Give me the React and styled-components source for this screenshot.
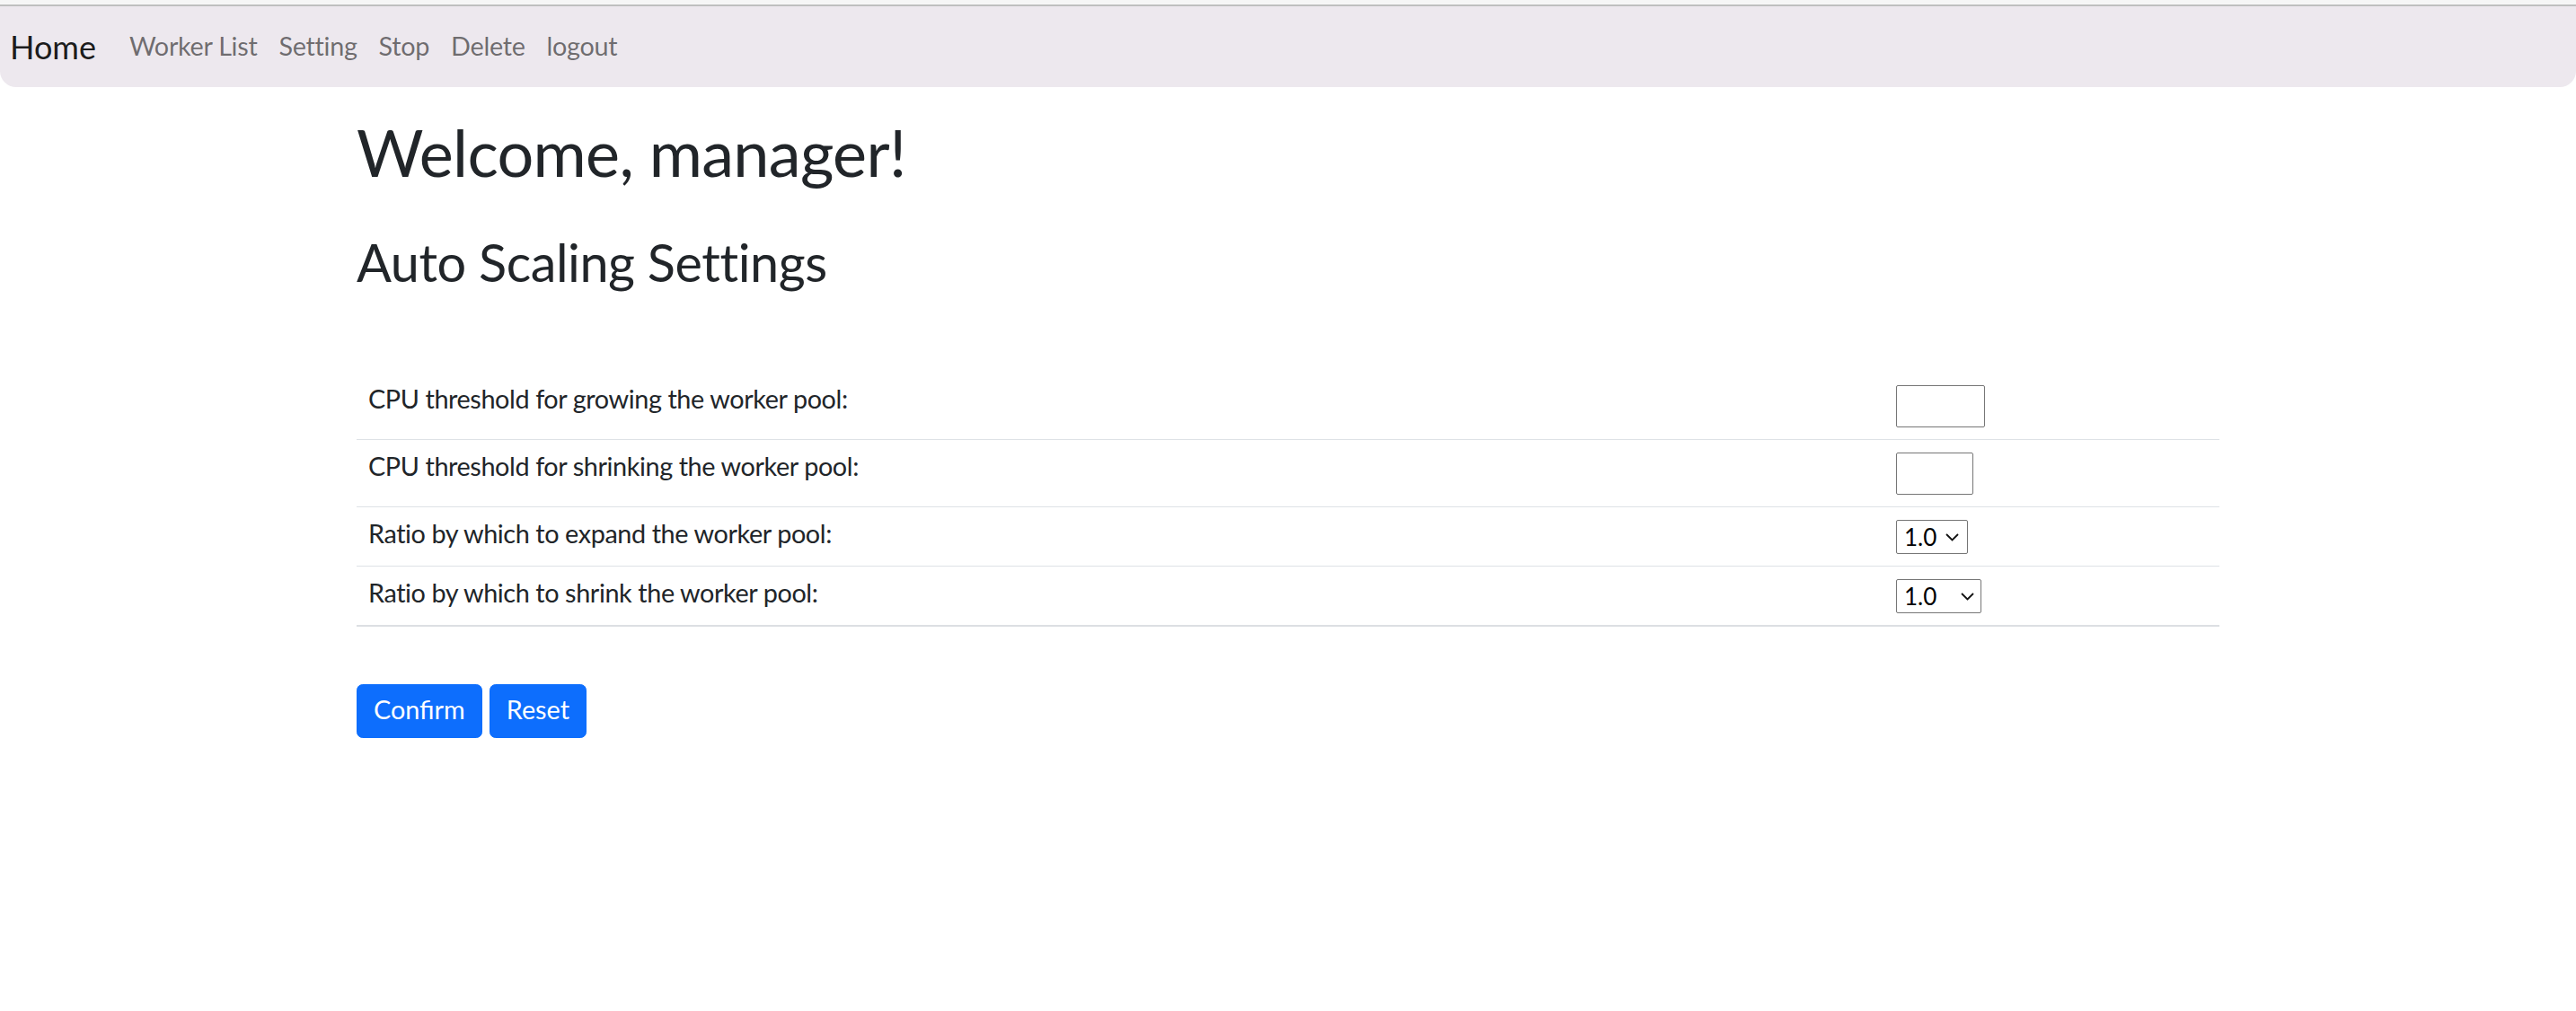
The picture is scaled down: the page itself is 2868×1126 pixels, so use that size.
import React from "react";
import styled, { createGlobalStyle } from "styled-components";

const GlobalStyle = createGlobalStyle`
  body {
    margin: 0;
    background: #fff;
    color: #212529;
    font-family: "Lato", "Open Sans", sans-serif;
  }
  * { box-sizing: border-box; }
`;

const TopEdge = styled.div`
  height: 7px;
  background: #f6f6f6;
  border-bottom: 2px solid #bfbfbf;
`;

const Navbar = styled.nav`
  height: 90px;
  display: flex;
  align-items: center;
  padding-left: 11px;
  background: #ede8ee;
  border-radius: 0 0 18px 18px;
`;

const Brand = styled.a`
  font-size: 36px;
  line-height: 54px;
  color: rgba(0, 0, 0, 0.9);
  text-decoration: none;
  margin-right: 25px;
`;

const NavLink = styled.a`
  font-size: 28.8px;
  line-height: 43.2px;
  padding: 0 12px;
  letter-spacing: -0.3px;
  color: rgba(0, 0, 0, 0.55);
  text-decoration: none;
`;

const Container = styled.main`
  width: 2074px;
  margin: 0 auto;
`;

const Title = styled.h1`
  margin: 29px 0 0;
  font-size: 72px;
  line-height: 86.4px;
  font-weight: 400;
  letter-spacing: -0.7px;
`;

const Subtitle = styled.h2`
  margin: 45px 0 0;
  font-size: 57.6px;
  line-height: 69.12px;
  font-weight: 400;
  letter-spacing: -0.45px;
`;

const SettingsTable = styled.div`
  margin-top: 88px;
  display: grid;
  grid-template-columns: 1700px 1fr;
`;

const Label = styled.div`
  padding: 8.3px 13px 0;
  font-size: 28.8px;
  line-height: 43.2px;
  letter-spacing: -0.4px;
  border-bottom: ${(p) => (p.$last ? "2px solid #dcdfe3" : "1px solid #dee2e6")};
`;

const Control = styled.div`
  padding: 14px 0 13px 14px;
  border-bottom: ${(p) => (p.$last ? "2px solid #dcdfe3" : "1px solid #dee2e6")};
  display: flex;
  align-items: flex-start;
`;

const NumberInput = styled.input`
  width: ${(p) => p.$w}px;
  height: 47px;
  border: 1px solid #767676;
  border-radius: 2px;
  background: #fff;
  padding: 0 6px;
  font-size: 24px;
  font-family: inherit;
`;

const SelectWrap = styled.div`
  position: relative;
  width: ${(p) => p.$w}px;
  height: 38px;
`;

const Select = styled.select`
  appearance: none;
  width: 100%;
  height: 100%;
  border: 1px solid #767676;
  border-radius: 2px;
  background: #fff;
  padding: 0 0 0 8px;
  font-size: 26px;
  font-family: inherit;
  color: #000;
`;

const Chevron = styled.svg`
  position: absolute;
  top: 15px;
  right: ${(p) => p.$r}px;
  width: 15px;
  height: 9px;
  pointer-events: none;
`;

const Actions = styled.div`
  margin-top: 64px;
  display: flex;
  gap: 8px;
`;

const Button = styled.button`
  height: 60px;
  padding: 6.5px 18px 8.3px;
  font-family: inherit;
  font-size: 28.8px;
  line-height: 43.2px;
  color: #fff;
  background: #0d6efd;
  border: 1px solid #0d6efd;
  border-radius: 6.75px;
`;

const links = ["Worker List", "Setting", "Stop", "Delete", "logout"];

const rows = [
  { label: "CPU threshold for growing the worker pool:", kind: "input", w: 99 },
  { label: "CPU threshold for shrinking the worker pool:", kind: "input", w: 86 },
  { label: "Ratio by which to expand the worker pool:", kind: "select", w: 80, r: 10 },
  { label: "Ratio by which to shrink the worker pool:", kind: "select", w: 95, r: 8 },
];

export default function App() {
  return (
    <>
      <GlobalStyle />
      <TopEdge />
      <Navbar>
        <Brand href="#">Home</Brand>
        {links.map((l) => (
          <NavLink key={l} href="#">
            {l}
          </NavLink>
        ))}
      </Navbar>
      <Container>
        <Title>Welcome, manager!</Title>
        <Subtitle>Auto Scaling Settings</Subtitle>
        <SettingsTable>
          {rows.map((row, i) => {
            const last = i === rows.length - 1;
            return (
              <React.Fragment key={row.label}>
                <Label $last={last}>{row.label}</Label>
                <Control $last={last}>
                  {row.kind === "input" ? (
                    <NumberInput type="text" $w={row.w} />
                  ) : (
                    <SelectWrap $w={row.w}>
                      <Select defaultValue="1.0">
                        <option>1.0</option>
                        <option>1.5</option>
                        <option>2.0</option>
                      </Select>
                      <Chevron $r={row.r} viewBox="0 0 15 9">
                        <polyline points="1,1 7.5,7.5 14,1" fill="none" stroke="#111" strokeWidth="1.8" />
                      </Chevron>
                    </SelectWrap>
                  )}
                </Control>
              </React.Fragment>
            );
          })}
        </SettingsTable>
        <Actions>
          <Button>Confirm</Button>
          <Button>Reset</Button>
        </Actions>
      </Container>
    </>
  );
}
